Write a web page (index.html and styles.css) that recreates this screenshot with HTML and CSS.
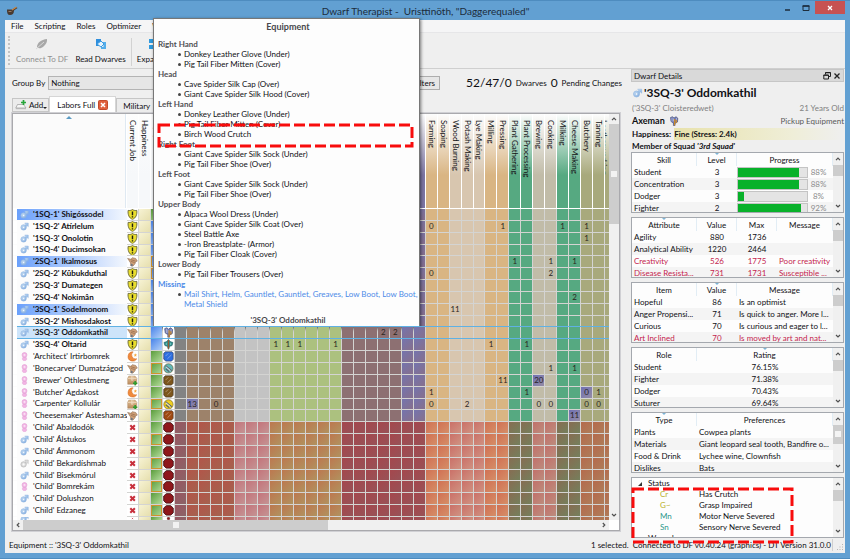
FILE: index.html
```html
<!DOCTYPE html>
<html lang="en">
<head>
<meta charset="utf-8">
<title>Dwarf Therapist</title>
<link rel="stylesheet" href="styles.css">
</head>
<body>
<svg class="sprite" aria-hidden="true">
  <defs>
    <linearGradient id="g-male" x1="0" y1="0" x2="1" y2="1"><stop offset="0" stop-color="#c9e0f6"/><stop offset="1" stop-color="#7fabdf"/></linearGradient>
    <linearGradient id="g-box" x1="0" y1="0" x2="0" y2="1"><stop offset="0" stop-color="#e4c39a"/><stop offset="1" stop-color="#b98a5c"/></linearGradient>
  </defs>
  <symbol id="i-male" viewBox="0 0 10 10"><path d="M5.2 1.2h4v4l-1.300-1.200L6.600 5.200 5 3.600l1.300-1.200z" fill="url(#g-male)" stroke="#8fb4e0" stroke-width=".5"/><circle cx="4" cy="6" r="3" fill="url(#g-male)" stroke="#8fb4e0" stroke-width=".7"/><circle cx="4" cy="6" r="1.200" fill="#f2f8ff" stroke="#9bbce2" stroke-width=".5"/></symbol>
  <symbol id="i-female" viewBox="0 0 10 10"><path d="M3.600 5.500h2.800v1h1v2h-1v1.100H3.600V8.500h-1v-2h1z" fill="#f2b4e4" stroke="#e2a0d4" stroke-width=".4"/><circle cx="5" cy="3.300" r="2.700" fill="#f3b9e6" stroke="#e09ad0" stroke-width=".7"/><circle cx="5" cy="3.300" r="1" fill="#fbe6f6"/></symbol>
  <symbol id="i-neuter" viewBox="0 0 10 10"><path d="M5.200 1.200h4v4l-1.300-1.200L6.600 5.200 5 3.600l1.300-1.200z" fill="#dcdcdc" stroke="#b4b4b4" stroke-width=".5"/><circle cx="4" cy="6" r="3" fill="#dadada" stroke="#b4b4b4" stroke-width=".7"/><circle cx="4" cy="6" r="1.200" fill="#fafafa"/></symbol>
  <symbol id="i-shield" viewBox="0 0 10 10"><path d="M5 .5C6.300 1.400 7.700 1.500 9 1.300 9.400 5 8.300 8.200 5 9.600 1.700 8.200.6 5 1 1.300 2.300 1.500 3.700 1.400 5 .5z" fill="#e9de2e" stroke="#6d6a3a" stroke-width=".9"/><path d="M5 2.400v3.400M5 6.800v1.100" stroke="#1c1c10" stroke-width="1.300"/></symbol>
  <symbol id="i-pickup" viewBox="0 0 10 10"><path d="M.5 2.200l3 .8L5 1.500l3 .8 1.500 2.400-1.700.8-.4 1.600-2 2.300-2-.4-.2-2.600L1.800 4.200z" fill="#cfa078" stroke="#8a6a50" stroke-width=".5"/><path d="M3.500 3.400l4.200 1.300M3.600 5l3.500 1" stroke="#8e6647" stroke-width=".6"/><path d="M3.800 7l1.800 1-1 1.700-1.300-.6z" fill="#6f7680"/></symbol>
  <symbol id="i-moon" viewBox="0 0 10 10"><path d="M5.600.8A4.300 4.300 0 1 0 9 7.200 3.700 3.700 0 0 1 5.600.8z" fill="#f08a3c" stroke="#d06a22" stroke-width=".5"/><path d="M7.700 2l.4 1.200 1.200.1-1 .8.3 1.100-.9-.6-1 .6.300-1.100-1-.8 1.300-.1z" fill="#f4a640"/></symbol>
  <symbol id="i-box" viewBox="0 0 10 10"><path d="M1.600 1h5.800L9 3v5.600H.6V3z" fill="url(#g-box)" stroke="#a87f58" stroke-width=".4"/><path d="M.6 3.200H9M4 1v3.800h1.400V1" stroke="#efdcc3" stroke-width=".7" fill="none"/><path d="M7.500 5.600v4M5.500 7.600h4" stroke="#2f9c2f" stroke-width="1.500"/></symbol>
  <symbol id="i-cross" viewBox="0 0 10 10"><path d="M3 3l4.200 4.200M7.200 3L3 7.200" stroke="#c8303c" stroke-width="1.900"/></symbol>
  <symbol id="i-axe" viewBox="0 0 10 10"><path d="M1.500 1.500l2-.8L5 2l2-1.300 1.800 1.500L8.500 6 6 7.500V9.500H4.400V7L2 5.500z" fill="#6d78b4" stroke="#40466f" stroke-width=".6"/><path d="M3 1.600v4M4.600 2.400v3M7.400 2v3.600" stroke="#c6cbe4" stroke-width=".7"/><path d="M5.600 3v6.500M7.200 4v3" stroke="#c98828" stroke-width="1.200"/></symbol>
  <symbol id="i-spear" viewBox="0 0 10 10"><path d="M5 .4l1.500 2 2.600.8-.8 2.800L6 6.800 5 9.600 4 6.800 1.700 6 .9 3.200l2.600-.8z" fill="#2f9290" stroke="#1d5e64" stroke-width=".6"/><path d="M5 1v8" stroke="#9b5a34" stroke-width="1.200"/><path d="M3 3.500v2M7 3.500v2" stroke="#7ed0c8" stroke-width=".8"/></symbol>
  <symbol id="i-gem" viewBox="0 0 10 10"><path d="M2 .7h6.300l1.100 1.200v5.800L7.700 9.400H2.600L.6 7.500V2.200z" fill="currentColor" stroke="#1e1c20" stroke-opacity=".55" stroke-width=".8"/><path d="M2.300 4.700l2.500-2.500M4 7.200l3.700-3.600" stroke="#fff" stroke-opacity=".35" stroke-width=".9"/></symbol>
  <symbol id="i-ring" viewBox="0 0 10 10"><circle cx="5" cy="5" r="4.300" fill="currentColor" stroke="#6b5a2a" stroke-opacity=".7" stroke-width=".8"/><path d="M2.400 2.600l5.600 4.600M2.400 5.300l3.400 2.800" stroke="#5c6670" stroke-width="1.100"/><path d="M2.800 3.600l4 3.500" stroke="#eef4f6" stroke-width=".9"/></symbol>
  <symbol id="i-dot" viewBox="0 0 10 10"><path d="M3 .6h4l2.400 2.200v4.400L7 9.400H3L.6 7.200V2.800z" fill="#8f171b" stroke="#3d0f12" stroke-width=".8"/></symbol>
  <symbol id="i-up" viewBox="0 0 6 6"><path d="M1 4.200L3 2.200l2 2" fill="none" stroke="#505050" stroke-width="1.200"/></symbol>
  <symbol id="i-down" viewBox="0 0 6 6"><path d="M1 2l2 2 2-2" fill="none" stroke="#505050" stroke-width="1.200"/></symbol>
</svg>

<div class="window">
  <header class="titlebar">
    <svg class="app-icon" viewBox="0 0 12 10" aria-hidden="true"><path d="M1 3.500h5L10 1l1.500 1-3.500 2.500c0 3-1.500 4.500-4 4.500S.8 7 1 3.500z" fill="#4a3a30"/><path d="M6 4l4.500-3" stroke="#c98a4a" stroke-width="1.200"/><path d="M2.500 5.500h3" stroke="#9a7b62"/></svg>
    <h1>Dwarf Therapist -&nbsp; Uristtinöth, "Daggerequaled"</h1>
    <div class="win-buttons">
      <button class="win-btn" aria-label="Minimize"><svg viewBox="0 0 8 8"><path d="M1 6h5" stroke="#1d2d3c" stroke-width="1.500"/></svg></button>
      <button class="win-btn" aria-label="Maximize"><svg viewBox="0 0 8 8"><path d="M1 2h6v4.500H1z" fill="none" stroke="#1d2d3c"/><path d="M.5 2h7" stroke="#1d2d3c" stroke-width="1.500"/></svg></button>
      <button class="win-btn win-close" aria-label="Close"><svg viewBox="0 0 8 8"><path d="M2 2l4 4M6 2L2 6" stroke="#fff" stroke-width="1.300"/></svg></button>
    </div>
  </header>

  <div class="client">
    <nav class="menubar">
      <button>File</button><button>Scripting</button><button>Roles</button><button>Optimizer</button><button>Window</button>
    </nav>
    <div class="toolbar">
      <button class="tool" disabled><svg viewBox="0 0 14 12" aria-hidden="true"><path d="M2 9C2 5 6 1.500 12 1c.5 3-1 5-3.500 7.500C6 10.500 4 11 2 9z" fill="#a8a8a8"/><path d="M1 11l8-7" stroke="#d8d8d8"/></svg>Connect To DF</button>
      <button class="tool"><svg viewBox="0 0 14 12" aria-hidden="true"><path d="M2 1h5v4H5v3H2z" fill="#2f8fdd"/><path d="M7 4h5v7H7V9h2.500V6.500H7z" fill="#55aeea"/><path d="M3 6l4-3 3 3-3 3z" fill="#e6f4ff" stroke="#3a9ae2"/></svg>Read Dwarves</button>
      <span class="tool-sep"></span>
      <button class="tool"><svg viewBox="0 0 14 12" aria-hidden="true"><path d="M1 1h5v4H1zM1 7h5v4H1zM8 4h5v4H8z" fill="#2f9ade"/></svg>Expand All</button>
    </div>

    <div class="workspace">
      <main class="pane">
        <div class="filters">
          <label for="group-by">Group By</label>
          <select id="group-by"><option>Nothing</option></select>
          <button class="filters-btn">Filters</button>
          <p class="counts"><b>52/47/0</b> Dwarves <b>0</b> Pending Changes</p>
        </div>
        <div class="tabs">
          <button class="tab-add"><svg viewBox="0 0 12 10" aria-hidden="true"><path d="M2.500 4.500h6L11 8H.8z" fill="#f6f6f6" stroke="#9a9a9a" stroke-width=".7"/><path d="M.8 8H11v1.200H.8z" fill="#b8b8b8"/><path d="M8.500 0v5M6 2.500h5" stroke="#27a53a" stroke-width="1.700"/></svg>Add<i class="caret"></i></button>
          <button class="tab active">Labors Full <svg viewBox="0 0 10 10" aria-hidden="true"><rect x=".5" y=".5" width="9" height="9" rx="1" fill="#e0603c" stroke="#c34a2a"/><path d="M3 3l4 4M7 3L3 7" stroke="#fff" stroke-width="1.500"/></svg></button>
          <button class="tab">Military</button>
        </div>
        <div class="grid-frame">
          <table class="labors">
            <thead><tr id="labor-head"></tr></thead>
            <tbody id="labor-body"></tbody>
          </table>
          <div class="vbar">
            <svg><use href="#i-up"/></svg>
            <div class="vtrack"><div class="vthumb"><i></i></div></div>
            <svg><use href="#i-down"/></svg>
          </div>
          <div class="hbar">
            <svg class="left"><use href="#i-up"/></svg>
            <div class="htrack"><div class="hthumb"><i></i></div></div>
            <svg class="right"><use href="#i-up"/></svg>
          </div>
        </div>
      </main>

      <aside class="dock">
        <div class="dock-title"><span>Dwarf Details</span>
          <button aria-label="Float"><svg viewBox="0 0 8 8"><path d="M2.500 2.500v-2h5v4h-2M.8 3h4.700v4H.8z" fill="none" stroke="#222"/><path d="M.5 3.300h5M2.500.8h5" stroke="#222"/></svg></button>
          <button aria-label="Close"><svg viewBox="0 0 8 8"><path d="M1.500 1.500l5 5M6.500 1.500l-5 5" stroke="#222" stroke-width="1.300"/></svg></button>
        </div>
        <div class="info">
          <h2><svg><use href="#i-male"/></svg>'3SQ-3' Oddomkathil</h2>
          <p class="dim"><span>('3SQ-3' Cloisteredwet)</span><span>21 Years Old</span></p>
          <p class="job"><b>Axeman <svg><use href="#i-axe"/></svg></b><span>Pickup Equipment</span></p>
          <p class="mood"><b>Happiness:</b> <b class="fine">Fine (Stress: 2.4k)</b></p>
          <p class="squad"><b>Member of Squad <em>'3rd Squad'</em></b></p>
        </div>

        <section class="panel">
          <table class="cols-3">
            <thead><tr><th>Skill</th><th class="sort">Level</th><th>Progress</th></tr></thead>
            <tbody>
              <tr><td>Student</td><td>3</td><td class="prog"><progress max="100" value="88" aria-label="Student"></progress><span>88%</span></td></tr>
              <tr><td>Concentration</td><td>3</td><td class="prog"><progress max="100" value="88" aria-label="Concentration"></progress><span>88%</span></td></tr>
              <tr><td>Dodger</td><td>3</td><td class="prog"><progress max="100" value="8" aria-label="Dodger"></progress><span>8%</span></td></tr>
              <tr><td>Fighter</td><td>2</td><td class="prog"><progress max="100" value="92" aria-label="Fighter"></progress><span>92%</span></td></tr>
            </tbody>
          </table>
          <div class="sbar"><svg><use href="#i-up"/></svg><i></i><svg><use href="#i-down"/></svg></div>
        </section>

        <section class="panel">
          <table class="cols-4">
            <thead><tr><th class="sort">Attribute</th><th>Value</th><th>Max</th><th>Message</th></tr></thead>
            <tbody>
              <tr><td>Agility</td><td>880</td><td>1736</td><td></td></tr>
              <tr><td>Analytical Ability</td><td>1220</td><td>2464</td><td></td></tr>
              <tr class="bad"><td>Creativity</td><td>526</td><td>1775</td><td>Poor creativity</td></tr>
              <tr class="bad"><td>Disease Resista...</td><td>731</td><td>1731</td><td>Susceptible ...</td></tr>
            </tbody>
          </table>
          <div class="sbar"><svg><use href="#i-up"/></svg><i></i><svg><use href="#i-down"/></svg></div>
        </section>

        <section class="panel">
          <table class="cols-3">
            <thead><tr><th>Item</th><th class="sort">Value</th><th>Message</th></tr></thead>
            <tbody>
              <tr><td>Hopeful</td><td>86</td><td>Is an optimist</td></tr>
              <tr><td>Anger Propensi...</td><td>71</td><td>Is quick to anger. More l...</td></tr>
              <tr><td>Curious</td><td>70</td><td>Is curious and eager to l...</td></tr>
              <tr class="bad"><td>Art Inclined</td><td>70</td><td>Is moved by art and nat...</td></tr>
            </tbody>
          </table>
          <div class="sbar"><svg><use href="#i-up"/></svg><i></i><svg><use href="#i-down"/></svg></div>
        </section>

        <section class="panel">
          <table class="cols-2 centered">
            <thead><tr><th>Role</th><th class="sort">Rating</th></tr></thead>
            <tbody>
              <tr><td>Student</td><td>76.15%</td></tr>
              <tr><td>Fighter</td><td>71.38%</td></tr>
              <tr><td>Dodger</td><td>70.43%</td></tr>
              <tr><td>Suturer</td><td>69.64%</td></tr>
            </tbody>
          </table>
          <div class="sbar"><svg><use href="#i-up"/></svg><i></i><svg><use href="#i-down"/></svg></div>
        </section>

        <section class="panel">
          <table class="cols-2">
            <thead><tr><th class="sort">Type</th><th>Preferences</th></tr></thead>
            <tbody>
              <tr><td>Plants</td><td>Cowpea plants</td></tr>
              <tr><td>Materials</td><td>Giant leopard seal tooth, Bandfire o...</td></tr>
              <tr><td>Food &amp; Drink</td><td>Lychee wine, Clownfish</td></tr>
              <tr><td>Dislikes</td><td>Bats</td></tr>
            </tbody>
          </table>
          <div class="sbar tall"><svg><use href="#i-up"/></svg><i><b></b></i><svg><use href="#i-down"/></svg></div>
        </section>

        <div class="status-wrap">
          <section class="panel">
            <div class="tree">
              <div class="node"><svg viewBox="0 0 6 6"><path d="M5 1v4H1z" fill="#333"/></svg>Status</div>
              <dl>
                <dt>Cr</dt><dd>Has Crutch</dd>
                <dt>G~</dt><dd>Grasp Impaired</dd>
                <dt class="teal">Mn</dt><dd>Motor Nerve Severed</dd>
                <dt class="teal">Sn</dt><dd>Sensory Nerve Severed</dd>
              </dl>
              <div class="node"><svg viewBox="0 0 6 6"><path d="M5 1v4H1z" fill="#333"/></svg>Wounds</div>
            </div>
            <div class="sbar"><svg><use href="#i-up"/></svg><i></i><svg><use href="#i-down"/></svg></div>
          </section>
          <svg class="mark mark-status" aria-hidden="true"><rect x="2" y="2"/></svg>
        </div>
      </aside>
    </div>

    <footer class="statusbar">
      <span>Equipment :: '3SQ-3' Oddomkathil</span>
      <span class="push">1 selected.</span>
      <span class="version">Connected to DF v0.40.24 (graphics) - DT Version 31.0.0</span>
      <svg class="grip" viewBox="0 0 8 8" aria-hidden="true"><path d="M6 1h1v1H6zM6 3.500h1v1H6zM6 6h1v1H6zM3.500 3.500h1v1h-1zM3.500 6h1v1h-1zM1 6h1v1H1z" fill="#b5b5b5"/></svg>
    </footer>
  </div>
</div>

<div class="tooltip" role="tooltip">
  <h3>Equipment</h3>
  <h4>Right Hand</h4>
  <ul><li>Donkey Leather Glove (Under)</li><li>Pig Tail Fiber Mitten (Cover)</li></ul>
  <h4>Head</h4>
  <ul><li>Cave Spider Silk Cap (Over)</li><li>Giant Cave Spider Silk Hood (Cover)</li></ul>
  <h4>Left Hand</h4>
  <ul><li>Donkey Leather Glove (Under)</li><li>Pig Tail Fiber Mitten (Cover)</li><li>Birch Wood Crutch</li></ul>
  <h4>Right Foot</h4>
  <ul><li>Giant Cave Spider Silk Sock (Under)</li><li>Pig Tail Fiber Shoe (Over)</li></ul>
  <h4>Left Foot</h4>
  <ul><li>Giant Cave Spider Silk Sock (Under)</li><li>Pig Tail Fiber Shoe (Over)</li></ul>
  <h4>Upper Body</h4>
  <ul><li>Alpaca Wool Dress (Under)</li><li>Giant Cave Spider Silk Coat (Over)</li><li>Steel Battle Axe</li><li>-Iron Breastplate- (Armor)</li><li>Pig Tail Fiber Cloak (Cover)</li></ul>
  <h4>Lower Body</h4>
  <ul><li>Pig Tail Fiber Trousers (Over)</li></ul>
  <h4 class="missing">Missing</h4>
  <ul class="missing"><li>Mail Shirt, Helm, Gauntlet, Gauntlet, Greaves, Low Boot, Low Boot, Metal Shield</li></ul>
  <p>'3SQ-3' Oddomkathil</p>
  <svg class="mark mark-item" aria-hidden="true"><rect x="2" y="2"/></svg>
</div>
<script src="app.js"></script>
</body>
</html>
```

FILE: styles.css
```css
* { box-sizing: border-box; margin: 0; padding: 0; }
body {
  height: 100vh;
  overflow: hidden;
  font: 8px/12px Lato, "Open Sans", sans-serif;
  color: #101014;
}
button, select { font: inherit; color: inherit; background: none; border: 0; }
svg { display: block; width: 10px; height: 10px; flex: none; }
.sprite { position: absolute; width: 0; height: 0; }
ul { list-style: none; }
table { border-spacing: 0; }
td, th { font-weight: 400; text-align: left; white-space: nowrap; overflow: hidden; }

.window {
  height: 100%;
  display: flex;
  flex-direction: column;
  padding: 0 5px 5px;
  background: #62a0d2;
  border: solid #4e8cbf;
  border-width: 1px 0;
}
.titlebar { display: flex; align-items: center; height: 19px; flex: none; }
.app-icon { width: 12px; margin-left: 1px; }
.titlebar h1 { flex: 1; padding-left: 54px; text-align: center; font-size: 10px; font-weight: 400; color: #1c2c3c; }
.win-buttons { display: flex; align-self: flex-start; }
.win-btn { display: flex; align-items: center; justify-content: center; width: 18px; height: 13px; }
.win-btn svg { width: 8px; height: 8px; }
.win-close { width: 30px; background: #c75252; }

.client { flex: 1; min-height: 0; display: flex; flex-direction: column; background: #efefef; }
.menubar { display: flex; align-items: center; gap: 11px; height: 13px; padding: 0 6px; background: #f5f5f6; border-bottom: 1px solid #e6e6e8; flex: none; }
.toolbar { display: flex; align-items: center; gap: 7px; height: 36px; padding: 2px 0 0 10px; border-bottom: 1px solid #cfcfcf; flex: none; }
.toolbar::before { content: ""; align-self: stretch; width: 0; margin: 1px -8px 3px -7px; border-left: 2px dotted #c4c4c4; padding-right: 7px; }
.tool { display: flex; flex-direction: column; align-items: center; gap: 3px; }
.tool svg { width: 14px; height: 12px; }
.tool:disabled { color: #909090; }
.tool-sep { width: 1px; height: 28px; margin: 0 -2px; background: #d2d2d2; }

.workspace { flex: 1; min-height: 0; display: flex; }
.pane { flex: 1; min-width: 0; display: flex; flex-direction: column; padding: 0 11px 6px 7px; }
.filters { display: flex; align-items: center; height: 27px; flex: none; }
.filters select { flex: 1; margin: 0 6px 0 3px; height: 14px; padding: 0 2px; border: 1px solid #b4b4b4; background: #e6e6e6; appearance: none; }
.filters-btn { height: 14px; padding: 0 4px; border: 1px solid #adadad; background: #e6e6e6; }
.counts { width: 182px; display: flex; justify-content: flex-end; align-items: center; gap: 4px; margin-right: -2px; white-space: nowrap; }
.counts b { font-size: 12px; font-weight: 400; }
.tabs { display: flex; align-items: flex-end; height: 17px; flex: none; }
.tab, .tab-add { display: flex; align-items: center; gap: 3px; height: 15px; padding: 0 6px; border: 1px solid #c6c6c6; border-bottom: 0; background: #ececec; white-space: nowrap; }
.tab.active { height: 17px; padding: 0 7px; background: #fff; border-color: #d6d6d6; }
.tab-add { height: 14px; padding: 0 1px 0 2px; gap: 2px; margin-bottom: 1px; border-bottom: 1px solid #c6c6c6; }
.tab-add svg { width: 12px; }
.caret { border: solid transparent; border-width: 2px 2px 0; border-top-color: #222; margin: 5px 0 0 -2px; }

.grid-frame {
  flex: 1; min-height: 0;
  display: grid;
  grid-template: minmax(0, 1fr) 10px / minmax(0, 1fr) 10px;
  border: 1px solid #a9a9ad;
  outline: 1px solid #d0d0d4;
  background: #fff;
}
.labors { display: flex; flex-direction: column; min-width: 0; min-height: 0; }
.labors thead { display: block; height: 95px; flex: none; }
.labors tr { display: grid; grid-template-columns: 113px repeat(40, minmax(0, 1fr)) 4px; column-gap: 1px; min-height: 0; }
.labors thead tr { height: 94px; }
.labors th.col {
  writing-mode: vertical-rl;
  line-height: 11px;
  padding-top: 6px;
  background: linear-gradient(#fdfdfd, var(--c) 65%);
}
.labors th.corner { background: #fbfbfb; border-right: 1px solid #dfe9f2; }
.labors th.corner::before { content: ""; display: block; width: 0; margin: 2px auto; border: solid transparent; border-width: 0 3px 3px; border-bottom-color: #5b9bc4; }
.labors tbody { flex: 1; min-height: 0; display: grid; grid-template-rows: repeat(26, minmax(0, 1fr)) 3px; row-gap: 1px; background: #d4d4d2; overflow: hidden; }
.labors tbody tr { overflow: hidden; }
.labors .name { display: flex; align-items: center; gap: 4px; margin-right: -1px; padding-left: 3px; border-left: 4px solid #fff; background: #fcfcfc; box-shadow: 0 1px #fcfcfc; white-space: nowrap; overflow: hidden; line-height: 11px; }
.labors tbody tr:not(.selected) { overflow: visible; }
.labors .name svg { width: 9px; height: 9px; }
.labors .military .name { font-weight: 700; }
.labors .leader .name { background: linear-gradient(90deg, #6aa0fb, #dfeafd 85%, #f4f8fe); }
.labors tbody td { background: var(--c); text-align: center; line-height: 11px; color: #2a241e; }
.labors tbody td.icon { background: #fff; }
.labors td.icon svg { width: 100%; height: 100%; }
.labors tbody .mood-cell { background: linear-gradient(135deg, #f7f3d4, #e6dfae); }
.labors tbody .gear { background: linear-gradient(135deg, #5a9c3c, #b4dc9c); }
.labors tbody .gear.blue { background: linear-gradient(135deg, #4a84ea, #b2d0f8); }
.labors .gear.alert { box-shadow: inset 0 0 0 1px #d0932c; }
.labors tbody td.skilled { background: linear-gradient(135deg, #6f70b4, #958ca4); }
.labors tbody tr.selected { position: relative; z-index: 1; overflow: visible; }
.labors tr.selected::after { content: ""; position: absolute; inset: -1px 0 -1px 4px; border: solid #5fb1e4; border-width: 1px 0; }
.labors .selected .name { background: #cde4fa; }

.vbar { display: flex; flex-direction: column; align-items: center; background: #f0f0f0; }
.vbar > svg, .hbar > svg { width: 6px; height: 6px; margin: 2px; }
.vtrack { flex: 1; width: 100%; }
.vthumb { height: 26%; background: #cdcdcd; display: flex; align-items: center; justify-content: center; }
.vthumb i, .hthumb i { width: 6px; height: 6px; background: #f2f2f2; }
.hbar { display: flex; align-items: center; background: #f0f0f0; }
.htrack { flex: 1; height: 100%; }
.hthumb { width: 53%; height: 100%; background: #cdcdcd; display: flex; align-items: center; justify-content: center; }
.left { transform: rotate(-90deg); }
.right { transform: rotate(90deg); }

.dock { width: 213px; flex: none; display: flex; flex-direction: column; margin-right: 1px; }
.dock-title { display: flex; align-items: center; gap: 2px; height: 13px; flex: none; padding: 0 2px; background: #d9d9d9; border: 1px solid #c6c6c6; }
.dock-title span { flex: 1; }
.dock-title svg { width: 8px; height: 8px; }
.info { height: 70px; flex: none; padding: 2px 0 0 1px; }
.info h2 { display: flex; align-items: center; gap: 1px; height: 18px; font-size: 12px; }
.info h2 svg { width: 11px; }
.info p { display: flex; justify-content: space-between; height: 12px; }
.info .dim { color: #808080; }
.info .job { height: 14px; align-items: center; color: #5a5a5a; }
.job b { display: flex; align-items: center; gap: 4px; font-size: 9px; color: #101014; }
.info .mood, .info .squad { justify-content: flex-start; gap: 3px; }
.fine { flex: 1; background: linear-gradient(90deg, #e8e2ac, #efeed8 70%, #efefef); }

.panel { display: flex; height: 61px; margin-bottom: 4px; flex: none; border: 1px solid #a4a8ae; background: #fdfdfd; overflow: hidden; }
.panel table { display: block; flex: 1; min-width: 0; }
.panel tr { display: grid; }
.panel thead, .panel tbody { display: block; }
.panel th { height: 13px; line-height: 14px; text-align: center; border-right: 1px solid #e2edf5; position: relative; }
.panel .sort::before { content: ""; position: absolute; top: 0; left: calc(50% - 2px); border: solid transparent; border-width: 2px 2px 0; border-top-color: #7db4d6; }
.panel td { height: 12px; padding: 0 2px; }
.panel tbody tr:nth-child(even) { background: #f4f4f4; }
.cols-2 tr { grid-template-columns: 65px 1fr; }
.cols-3 tr { grid-template-columns: 65px 40px 1fr; }
.cols-4 tr { grid-template-columns: 65px 40px 40px 1fr; }
.cols-3 td:nth-child(2), .cols-4 td:nth-child(2), .cols-4 td:nth-child(3), .centered td:nth-child(2) { text-align: center; }
.bad { color: #c41e4e; }
.prog { display: flex; align-items: center; color: #8c8c8c; }
.panel .prog { padding: 0 4px 0 0; }
.prog progress { appearance: none; width: 71px; height: 11px; border: 1px solid #c4c4c4; background: #e4e4e4; }
.prog progress::-webkit-progress-bar { background: #e4e4e4; }
.prog progress::-webkit-progress-value { background: #08b12a; }
.prog span { flex: 1; text-align: center; }
.sbar { display: flex; flex-direction: column; align-items: center; width: 10px; background: #f0f0f0; }
.sbar svg { width: 6px; height: 6px; margin: 3px 0; }
.sbar i { width: 10px; height: 11px; margin-bottom: auto; background: #cdcdcd; }
.sbar.tall i { height: 19px; padding: 6px 2px; }
.sbar b { display: block; height: 6px; background: #f4f4f4; }

.status-wrap { position: relative; }
.tree { flex: 1; }
.node { display: flex; align-items: center; gap: 5px; padding-left: 5px; height: 11px; line-height: 11px; }
.node svg { width: 6px; height: 6px; }
.tree dl { display: grid; grid-template-columns: 39px 1fr; line-height: 11px; padding-left: 28px; }
.tree dt { color: #b9b02c; }
.tree .teal { color: #2f988c; }

.mark { position: absolute; overflow: visible; }
.mark rect { width: calc(100% - 4px); height: calc(100% - 4px); fill: none; stroke: #f80c0c; stroke-width: 3px; stroke-dasharray: 11 4; }
.mark-status { left: 0; top: 10px; width: 163px; height: 57px; }
.mark-item { left: 3px; top: 104px; width: 257px; height: 25px; }

.statusbar { display: flex; align-items: center; height: 16px; flex: none; padding-left: 4px; }
.push { margin-left: auto; padding-right: 4px; }
.version { padding-right: 1px; border-right: 1px solid #d0d0d0; }
.grip { width: 8px; height: 8px; margin: 4px 1px 0 3px; }

.tooltip {
  position: absolute;
  left: 153px; top: 18px;
  width: 267px;
  padding: 2px 1px 2px 4px;
  line-height: 10px;
  background: #fdfdfd;
  border: 1px solid #777;
  box-shadow: 1px 1px 3px rgba(0, 0, 0, .5);
}
.tooltip h3, .tooltip p { text-align: center; font-weight: 700; color: #48484c; }
.tooltip h3 { font-size: 9px; line-height: 11px; margin-bottom: 7px; }
.tooltip h4 { font-size: 8px; color: #505054; }
.tooltip p { margin-top: 6px; }
.tooltip li { position: relative; padding-left: 26px; }
.tooltip li::before { content: ""; position: absolute; left: 20px; top: 4px; width: 3px; height: 3px; border-radius: 50%; background: #444; }
.tooltip .missing { color: #4d8be8; }
```

FILE: app.js
```javascript
// Labor columns: [header, cell colour, cell background for children]
const groups = {
  gray: ['#838383', 'linear-gradient(135deg,#9a5560,#8a6468)'],
  brown: ['#9d826a', 'linear-gradient(135deg,#b35549,#a4624f)'],
  silver: ['#c3c3c3', 'linear-gradient(135deg,#c4737a,#c49494)'],
  lime: ['#acc17f', 'linear-gradient(135deg,#bd774f,#b0935f)'],
  mauve: ['#8d7072', 'linear-gradient(135deg,#a5474d,#975257)'],
  violet: ['linear-gradient(135deg,#7474ae,#87708c)', 'linear-gradient(135deg,#a5474d,#975257)'],
  tan: ['#d9b583', 'linear-gradient(135deg,#d17053,#d58f68)'],
  beige: ['#d8c6af', 'linear-gradient(135deg,#cb7068,#cf9382)'],
  green: ['#56a981', 'linear-gradient(135deg,#876c52,#74805c)'],
  stone: ['#c1bca8', 'linear-gradient(135deg,#c2706a,#bc8d7e)'],
  olive: ['#a8a97c', 'linear-gradient(135deg,#b56a4c,#ae7d5a)']
};
const columns = [
  ['gray', ''], ['brown', '', '', '', ''], ['silver', '', '', ''],
  ['lime', '', '', '', '', '', ''], ['mauve', '', '', '', '', ''], ['violet', '', ''],
  ['tan', 'Farming', 'Soaping'], ['beige', 'Wood Burning', 'Potash Making', 'Lye Making'],
  ['tan', 'Milling', 'Pressing'], ['green', 'Plant Gathering', 'Plant Processing'],
  ['stone', 'Brewing', 'Cooking'], ['green', 'Milking', 'Cheese Making'],
  ['olive', 'Butchery', 'Tanning', 'Leatherworking']
].flatMap(([group, ...names]) => names.map(name => ({ name, group })));

// [name, gender, job icon, profession icon, profession colour, labor levels by column]
const dwarves = [
  ["'1SQ-1' Shigóssodel", 'male', 'shield', 'axe'],
  ["'1SQ-2' Atírlelum", 'male', 'shield', 'axe', '', { 21: 0, 27: 1, 32: 1, 34: 1 }],
  ["'1SQ-3' Onolotin", 'male', 'shield', 'axe', '', { 34: 1 }],
  ["'1SQ-4' Ducimsokan", 'male', 'shield', 'axe'],
  ["'2SQ-1' Ikalmosus", 'male', 'pickup', 'axe', '', { 28: 1, 31: 1, 33: 1 }],
  ["'2SQ-2' Kûbukduthal", 'male', 'shield', 'axe', '', { 21: 0, 31: 2 }],
  ["'2SQ-3' Dumategen", 'male', 'shield', 'axe'],
  ["'2SQ-4' Nokimân", 'male', 'shield', 'axe', '', { 33: 2 }],
  ["'3SQ-1' Sodelmonom", 'male', 'shield', 'axe', '', { 23: 11 }],
  ["'3SQ-2' Mishosdakost", 'male', 'shield', 'axe'],
  ["'3SQ-3' Oddomkathil", 'male', 'pickup', 'axe', '', { 17: 2, 18: 2 }],
  ["'3SQ-4' Oltarid", 'male', 'shield', 'spear', '', { 8: 1, 9: 1, 10: 1, 13: 1, 26: 1, 29: 1 }],
  ["'Architect' Irtirbomrek", 'female', 'moon', 'gem', '#2f6fe0'],
  ["'Bonecarver' Dumatzágod", 'female', 'pickup', 'ring', '#62b8b8', { 31: 1, 33: 1 }],
  ["'Brewer' Othlestmeng", 'female', 'box', 'gem', '#7d561c', { 27: 11, 30: [20] }],
  ["'Butcher' Agdakost", 'female', 'moon', 'gem', '#7d561c', { 21: 1, 29: 1, 34: [0], 35: 1 }],
  ["'Carpenter' Kollulár", 'female', 'box', 'ring', '#f0d020', { 1: [13], 3: 0, 21: 0, 24: 2, 30: 0, 31: 0, 34: 0, 35: 0 }],
  ["'Cheesemaker' Asteshamas", 'female', 'pickup', 'gem', '#a04a12', { 33: [11] }],
  ["'Child' Abaldodók", 'female'],
  ["'Child' Álstukos", 'male'],
  ["'Child' Ámmonom", 'male'],
  ["'Child' Bekardíshmab", 'neuter'],
  ["'Child' Bisekmórul", 'male'],
  ["'Child' Bomrekám", 'female'],
  ["'Child' Dolushzon", 'male'],
  ["'Child' Edzaneg", 'male'],
  ['', 'male']
];
const alerts = [4, 5, 13, 16, 19, 21, 23, 25];
const icon = id => `<svg><use href="#i-${id}"/></svg>`;

document.getElementById('labor-head').innerHTML =
  '<th class="corner"></th>' +
  ['Current Job', 'Happiness', 'Equipment', ''].map(n => `<th class="col" style="--c:#f6f8fa">${n}</th>`).join('') +
  columns.map(c => {
    const colour = c.group === 'violet' ? '#7d76a4' : groups[c.group][0];
    return `<th class="col" style="--c:${colour}">${c.name}</th>`;
  }).join('');

document.getElementById('labor-body').innerHTML = dwarves.map((d, row) => {
  const [name, gender, job = 'cross', prof = 'dot', tint = '', levels = {}] = d;
  const child = row >= 18;
  const military = row < 12;
  const rowClass = [
    military && 'military',
    [0, 4, 8].includes(row) && 'leader',
    row === 10 && 'selected'
  ].filter(Boolean).join(' ');
  const gear = 'gear' + (military && row > 0 ? ' blue' : '') + (alerts.includes(row) ? ' alert' : '');
  const cells = columns.map((c, i) => {
    const level = levels[i];
    const skilled = Array.isArray(level) ? ' class="skilled"' : '';
    return `<td${skilled} style="--c:${groups[c.group][child ? 1 : 0]}">${level ?? ''}</td>`;
  }).join('');
  return `<tr class="${rowClass}"><th class="name">${icon(gender)}${name}</th>` +
    `<td class="icon">${icon(job)}</td><td class="mood-cell"></td><td class="${gear}"></td>` +
    `<td class="icon" style="color:${tint}">${icon(prof)}</td>${cells}</tr>`;
}).join('');
```
